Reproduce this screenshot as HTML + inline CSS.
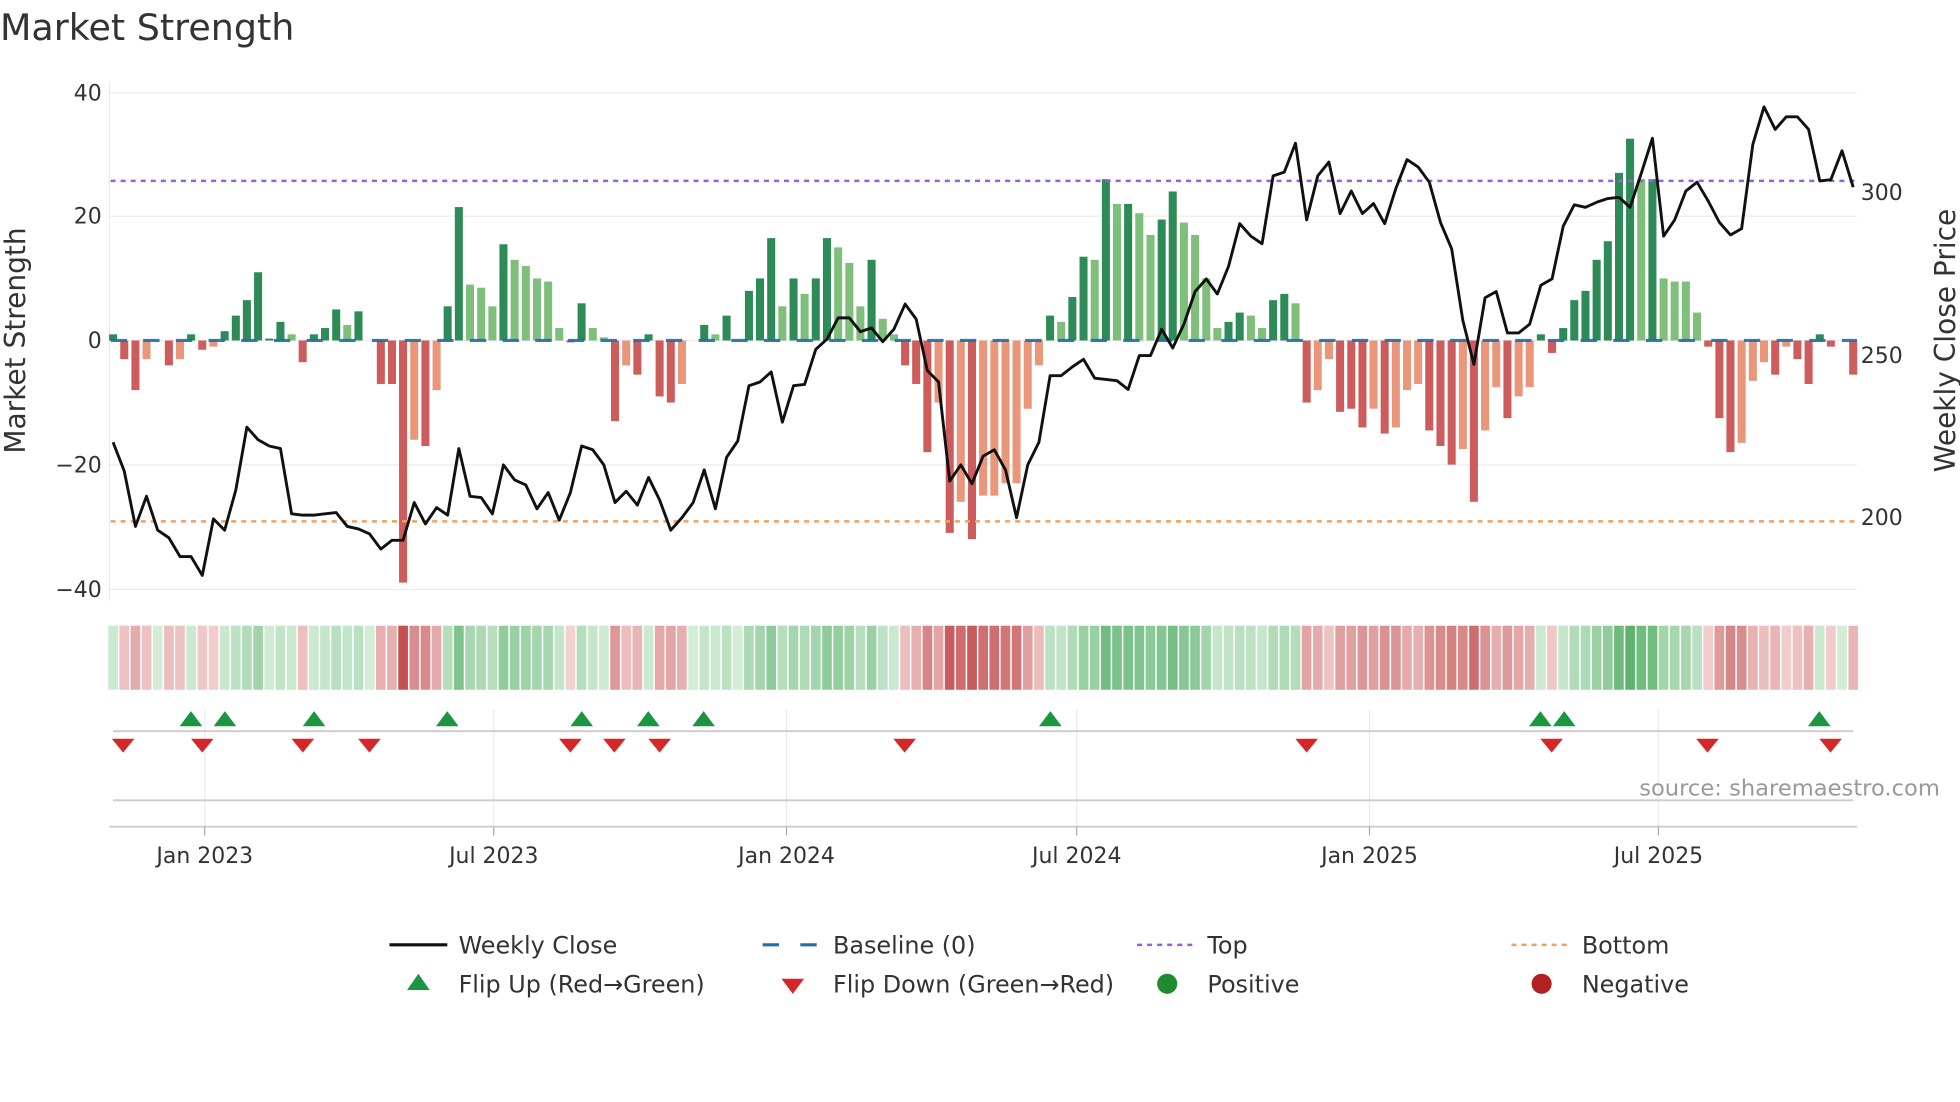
<!DOCTYPE html>
<html><head><meta charset="utf-8"><style>
html,body{margin:0;padding:0;background:#fff;width:1960px;height:1102px;overflow:hidden}
svg{display:block}
text{font-family:"DejaVu Sans","Liberation Sans",sans-serif;fill:#333}
</style></head><body>
<svg id="s" width="1960" height="1102" viewBox="0 0 1560 877.1" xmlns="http://www.w3.org/2000/svg">
<text x="0" y="32" font-size="29">Market Strength</text>
<g stroke="#ececec" stroke-width="1">
<line x1="87" y1="74" x2="1478" y2="74"/><line x1="87" y1="172" x2="1478" y2="172"/><line x1="87" y1="271" x2="1478" y2="271"/><line x1="87" y1="370" x2="1478" y2="370"/><line x1="87" y1="469" x2="1478" y2="469"/>
<line x1="87" y1="65" x2="87" y2="478"/>
<line x1="163" y1="565" x2="163" y2="658"/><line x1="393" y1="565" x2="393" y2="658"/><line x1="626" y1="565" x2="626" y2="658"/><line x1="857" y1="565" x2="857" y2="658"/><line x1="1090" y1="565" x2="1090" y2="658"/><line x1="1320" y1="565" x2="1320" y2="658"/>
</g>
<g font-size="17.5" text-anchor="end">
<text x="81" y="80">40</text><text x="81" y="178">20</text><text x="81" y="277">0</text><text x="81" y="376">−20</text><text x="81" y="475">−40</text>
</g>
<g font-size="17.5"><text x="1481" y="159">300</text><text x="1481" y="289">250</text><text x="1481" y="418">200</text></g>
<text font-size="22.3" transform="translate(20,271) rotate(-90)" text-anchor="middle">Market Strength</text>
<text font-size="22.3" transform="translate(1556,271) rotate(-90)" text-anchor="middle">Weekly Close Price</text>
<g id="bars"></g>
<line x1="88" y1="271" x2="1478" y2="271" stroke="#1f6fa8" stroke-width="2.5" stroke-dasharray="13,13" opacity="0.9"/>
<line x1="88" y1="144" x2="1478" y2="144" stroke="#9b5fd6" stroke-width="2" stroke-dasharray="4,4"/>
<line x1="88" y1="415" x2="1478" y2="415" stroke="#f0a060" stroke-width="2" stroke-dasharray="4,4"/>
<polyline id="pl" fill="none" stroke="#111" stroke-width="2.3" stroke-linejoin="round"/>
<g id="heat"></g>
<line x1="90" y1="582" x2="1475" y2="582" stroke="#ccc" stroke-width="1.5"/>
<line x1="90" y1="637" x2="1475" y2="637" stroke="#ccc" stroke-width="1.5"/>
<line x1="87" y1="658" x2="1478" y2="658" stroke="#ccc" stroke-width="1.5"/>
<g stroke="#aaa"><line x1="163" y1="658" x2="163" y2="665"/><line x1="393" y1="658" x2="393" y2="665"/><line x1="626" y1="658" x2="626" y2="665"/><line x1="857" y1="658" x2="857" y2="665"/><line x1="1090" y1="658" x2="1090" y2="665"/><line x1="1320" y1="658" x2="1320" y2="665"/></g>
<g id="tri"></g>
<g font-size="17.5" text-anchor="middle">
<text x="163" y="687">Jan 2023</text><text x="393" y="687">Jul 2023</text><text x="626" y="687">Jan 2024</text><text x="857" y="687">Jul 2024</text><text x="1090" y="687">Jan 2025</text><text x="1320" y="687">Jul 2025</text>
</g>
<text x="1544" y="633" font-size="18" text-anchor="end" style="fill:#999">source: sharemaestro.com</text>
<g font-size="19">
<line x1="310" y1="752" x2="356" y2="752" stroke="#111" stroke-width="2.5"/><text x="365" y="759">Weekly Close</text>
<line x1="607" y1="752" x2="651" y2="752" stroke="#1f6fa8" stroke-width="2.5" stroke-dasharray="13,17"/><text x="663" y="759">Baseline (0)</text>
<line x1="905" y1="752" x2="949" y2="752" stroke="#9b5fd6" stroke-width="2" stroke-dasharray="4,4"/><text x="961" y="759">Top</text>
<line x1="1203" y1="752" x2="1247" y2="752" stroke="#f0a060" stroke-width="2" stroke-dasharray="4,4"/><text x="1259" y="759">Bottom</text>
<polygon points="324,788 342,788 333,775" fill="#1a9641"/><text x="365" y="790">Flip Up (Red→Green)</text>
<polygon points="622,779 640,779 631,791" fill="#d62728"/><text x="663" y="790">Flip Down (Green→Red)</text>
<circle cx="929" cy="783" r="8" fill="#1f8a2e"/><text x="961" y="790">Positive</text>
<circle cx="1227" cy="783" r="8" fill="#b22222"/><text x="1259" y="790">Negative</text>
</g>
</svg>
<script>
var V="1G,-3R,-8R,-3r,0G,-4R,-3r,1G,-1.5R,-1r,1.5G,4G,6.5G,11G,0.3G,3G,1g,-3.5R,1G,2G,5G,2.5g,4.7G,0G,-7R,-7R,-39R,-16r,-17R,-8r,5.5G,21.5G,9g,8.5g,5.5g,15.5G,13g,12g,10g,9.5g,2g,-0.3R,6G,2g,0.5g,-13R,-4r,-5.5R,1G,-9R,-10R,-7r,0G,2.5G,1g,4G,0G,8G,10G,16.5G,5.5g,10G,7.5g,10G,16.5G,15g,12.5g,5.5g,13G,3.5g,1g,-4R,-7R,-18R,-10r,-31R,-26r,-32R,-25r,-25r,-23r,-23r,-11r,-4r,4G,3g,7G,13.5G,13g,26G,22g,22G,20.5g,17g,19.5G,24G,19g,17g,10g,2g,3G,4.5G,4g,2g,6.5G,7.5G,6g,-10R,-8r,-3r,-11.5R,-11R,-14R,-11r,-15R,-14r,-8r,-7r,-14.5R,-17R,-20R,-17.5r,-26R,-14.5r,-7.5r,-12.5R,-9r,-7.5r,1G,-2R,2G,6.5G,8G,13G,16G,27G,32.5G,26g,26G,10g,9.5g,9.5g,4.5g,-1R,-12.5R,-18R,-16.5r,-6.5r,-3.5r,-5.5R,-1r,-3R,-7R,1G,-1R,0G,-5.5R".split(",");
var P=[352,375,419,395,422,428,443,443,458,413,422,390,340,350,355,357,409,410,410,409,408,419,421,425,437,430,430,400,417,404,410,357,395,396,409,370,382,386,405,392,414,392,355,358,370,400,391,402,380,398,422,412,400,374,405,364,351,307,304,296,336,307,306,278,270,253,253,264,261,272,262,242,254,295,304,383,370,385,363,358,374,412,370,352,299,299,292,286,301,302,303,310,283,283,262,277,258,232,222,234,212,178,188,194,140,137,114,175,140,129,170,152,170,162,178,150,127,133,145,177,198,255,290,237,232,265,265,258,227,222,180,163,165,161,158,157,165,138,110,188,175,152,145,160,177,187,182,115,85,103,93,93,103,144,143,120,149];
var n=V.length,x0=90,x1=1475,dx=(x1-x0)/(n-1);
var col={G:"#2e8b57",g:"#7fbf7b",R:"#cd5c5c",r:"#e9967a"};
var b="",h="";
function mix(a,c,t){return "rgb("+[0,1,2].map(function(i){return Math.round(a[i]+(c[i]-a[i])*t)}).join(",")+")";}
for(var i=0;i<n;i++){var v=parseFloat(V[i]),c=V[i].slice(-1),x=x0+i*dx;
 var y0=271,y1=271-v*4.94;
 if(Math.abs(v)>0.1) b+='<rect x="'+(x-3.2).toFixed(1)+'" y="'+Math.min(y0,y1).toFixed(1)+'" width="6.4" height="'+Math.abs(y1-y0).toFixed(1)+'" fill="'+col[c]+'"/>';
 var t=Math.min(Math.abs(v)/35,1),fc;
 if(v>=0) fc=mix([210,236,214],[86,176,104],Math.pow(t,0.8)); else fc=mix([243,212,212],[196,80,82],Math.pow(t,0.8));
 h+='<rect x="'+(x-dx/2+0.6).toFixed(1)+'" y="498" width="'+(dx-1.2).toFixed(1)+'" height="51" fill="'+fc+'"/>';
}
document.getElementById("bars").innerHTML=b;document.getElementById("heat").innerHTML=h;
var pts=P.map(function(y,i){return (x0+i*(x1-x0)/(P.length-1)).toFixed(1)+","+y}).join(" ");
document.getElementById("pl").setAttribute("points",pts);
var up=[152,179,250,356,463,516,560,836,1226,1245,1448],dn=[98,161,241,294,454,489,525,720,1040,1235,1359,1457],t="";
up.forEach(function(x){t+='<polygon points="'+(x-9)+',578 '+(x+9)+',578 '+x+',566" fill="#1a9641"/>'});
dn.forEach(function(x){t+='<polygon points="'+(x-9)+',588 '+(x+9)+',588 '+x+',599" fill="#d62728"/>'});
document.getElementById("tri").innerHTML=t;
</script>
</body></html>
